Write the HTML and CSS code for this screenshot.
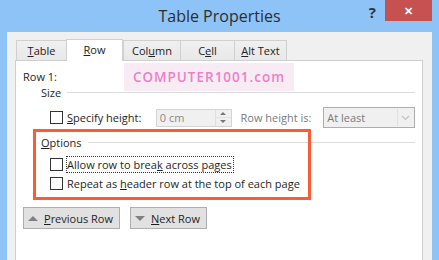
FILE: index.html
```html
<!DOCTYPE html>
<html lang="en">
<head>
    <meta charset="UTF-8">
    <title>Table Properties</title>
    <link rel="stylesheet" href="styles.css">
</head>
<body>
    <div class="window">
        <header class="titlebar">
            <span></span>
            <h1 class="title">Table Properties</h1>
            <div class="controls">
                <span class="help">?</span>
                <span class="close">&#x2715;</span>
            </div>
        </header>

        <div class="client">
            <nav class="tabs">
                <span class="tab"><u>T</u>able</span>
                <span class="tab active"><u>R</u>ow</span>
                <span class="tab">Col<u>u</u>mn</span>
                <span class="tab">C<u>e</u>ll</span>
                <span class="tab last"><u>A</u>lt Text</span>
            </nav>

            <section class="panel">
                <div class="watermark">COMPUTER1001.com</div>

                <div class="row-label">Row 1:</div>

                <div class="group-head"><span>Size</span><i class="rule"></i></div>
                <div class="size-row">
                    <span class="box"></span>
                    <span class="size-label"><u>S</u>pecify height:</span>
                    <span class="spin">
                        <span class="spin-value">0 cm</span>
                        <span class="spin-btns">
                            <span class="up"></span>
                            <span class="down"></span>
                        </span>
                    </span>
                    <span class="muted">Row height is:</span>
                    <span class="select">
                        <span class="select-value">At least</span>
                        <span class="select-arrow">
                            <svg width="9" height="6" viewBox="0 0 9 6"><path d="M1 1 L4.5 4.5 L8 1" fill="none" stroke="#c4c4c4" stroke-width="1.2"/></svg>
                        </span>
                    </span>
                </div>

                <div class="group-head"><span><u>O</u>ptions</span><i class="rule"></i></div>
                <div class="check first">
                    <span class="box"></span>
                    <span class="focus">Allow row to brea<u>k</u> across pages</span>
                </div>
                <div class="check">
                    <span class="box"></span>
                    <span>Repeat as <u>h</u>eader row at the top of each page</span>
                </div>

                <div class="buttons">
                    <button class="btn prev"><span class="tri up-tri"></span><span><u>P</u>revious Row</span></button>
                    <button class="btn next"><span class="tri down-tri"></span><span><u>N</u>ext Row</span></button>
                </div>

                <div class="highlight"></div>
            </section>
        </div>
    </div>
</body>
</html>
```

FILE: styles.css
```css
/* dialog look, Windows 8 style */
body { margin: 0; font-family: "Open Sans", "Noto Sans", sans-serif; font-size: 11px; color: #1e1e1e; }
u { text-decoration: underline; text-underline-offset: 1px; }

.window { width: 439px; height: 260px; background: #8dc3f6; overflow: hidden; display: flex; flex-direction: column; }

.titlebar { height: 32px; display: grid; grid-template-columns: 1fr auto 1fr; align-items: start; }
.title { margin: 0; padding-top: 4px; font-size: 16px; font-weight: 400; color: #2e2e2e; line-height: 24px; white-space: nowrap; }
.controls { justify-self: end; display: flex; align-items: flex-start; margin-right: 7px; }
.help { font-size: 15px; font-weight: 700; color: #333; line-height: 22px; margin-right: 9px; margin-top: 1px; }
.close { width: 47px; height: 21px; background: #c75050; color: #fff; font-size: 11px; font-weight: 700; display: flex; align-items: center; justify-content: center; }

.client { flex: 1; margin: 0 7px; background: #f0f0f0; padding: 7px 9px 0 8px; display: flex; flex-direction: column; }

.tabs { display: grid; grid-template-columns: 50px 57px 57px 54px 53px; align-items: end; margin-left: 1px; position: relative; z-index: 1; }
.tab { height: 19px; border: 1px solid #d0d0d0; border-right: none; border-bottom: none; background: linear-gradient(#f0f0f0, #e8e8e8); display: flex; align-items: center; justify-content: center; color: #222; }
.tab.last { border-right: 1px solid #d0d0d0; }
.tab.active { height: 22px; background: #fff; border-right: 1px solid #d0d0d0; margin-bottom: -1px; padding-bottom: 2px; box-sizing: border-box; }

.panel { position: relative; flex: 1; background: #fff; border: 1px solid #cfcfcf; border-bottom: none; padding: 8px 7px 0 7px; }

.watermark { position: absolute; left: 108px; top: 2px; width: 170px; height: 28px; background: #f8ecf4; color: #ec80c6; font-size: 13.5px; font-weight: 600; letter-spacing: 1px; display: flex; align-items: center; justify-content: center; }

.row-label { position: relative; line-height: 16px; }

.group-head { display: flex; align-items: center; gap: 6px; margin-left: 18px; line-height: 16px; }
.rule { flex: 1; height: 1px; background: #dcdcdc; margin-top: -1px; }
.group-head + .size-row { margin-top: 6px; }
.size-row + .group-head { margin-top: 7px; }

.size-row { display: flex; align-items: center; padding-left: 27px; height: 21px; white-space: nowrap; }
.box { width: 11px; height: 11px; border: 1px solid #333; background: #fff; flex: none; }
.size-label { margin-left: 4px; width: 89px; }
.spin { width: 74px; height: 16px; border: 1px solid #d4d4d4; background: #f0f0f0; display: flex; }
.spin-value { flex: 1; padding-left: 3px; color: #8a8a8a; line-height: 16px; }
.spin-btns { width: 15px; display: flex; flex-direction: column; border-left: 1px solid #e0e0e0; }
.spin-btns span { flex: 1; position: relative; }
.spin-btns .up { border-bottom: 1px solid #e0e0e0; }
.spin-btns .up::after, .spin-btns .down::after { content: ""; position: absolute; left: 4px; top: 2px; border-left: 3px solid transparent; border-right: 3px solid transparent; }
.spin-btns .up::after { border-bottom: 3px solid #777; }
.spin-btns .down::after { border-top: 3px solid #777; }
.muted { color: #7a7a7a; margin-left: 9px; width: 83px; }
.select { width: 90px; height: 19px; border: 1px solid #adadad; background: #f0f0f0; display: flex; }
.select-value { flex: 1; padding-left: 3px; color: #7a7a7a; line-height: 19px; }
.select-arrow { width: 15px; margin: 1px; border-left: 1px solid #e0e0e0; display: flex; align-items: center; justify-content: center; }

.check { display: flex; align-items: center; padding-left: 27px; height: 16px; margin-top: 3px; white-space: nowrap; }
.check.first { margin-top: 5px; }
.check .box { margin-right: 4px; }
.focus { outline: 1px dotted #333; outline-offset: 0; padding-right: 1px; }

.buttons { display: flex; gap: 10px; margin-top: 16px; }
.btn { height: 22px; border: 1px solid #adadad; background: #e1e1e1; font: inherit; color: #1e1e1e; padding: 0 4px; display: flex; align-items: center; gap: 6px; white-space: nowrap; }
.prev { width: 97px; }
.next { width: 77px; }
.tri { flex: none; width: 0; height: 0; border-left: 5px solid transparent; border-right: 5px solid transparent; }
.up-tri { border-bottom: 5px solid #808080; }
.down-tri { border-top: 5px solid #808080; }

.highlight { position: absolute; left: 17px; top: 68px; width: 272px; height: 65px; border: 3px solid #fa5c36; }
```
